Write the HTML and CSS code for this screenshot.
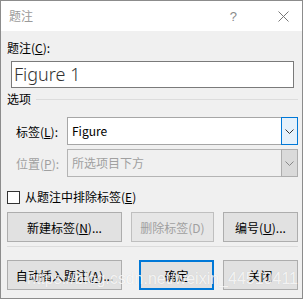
FILE: index.html
```html
<!DOCTYPE html>
<html lang="zh-CN">
<head>
    <meta charset="UTF-8">
    <title>题注</title>
    <link rel="stylesheet" href="styles.css">
</head>
<body>
    <div class="dialog">
        <div class="titlebar">
            <span class="title">题注</span>
            <span class="help">?</span>
            <svg class="close" width="11" height="11" viewBox="0 0 11 11">
                <path d="M0.5 0.5 L10.5 10.5 M10.5 0.5 L0.5 10.5" stroke="#777" stroke-width="1" fill="none"/>
            </svg>
        </div>

        <div class="content">
            <div class="field-label">题注(<u>C</u>):</div>
            <div class="caption-input">Figure 1</div>

            <div class="group-title">
                <span>选项</span>
                <div class="group-line"></div>
            </div>

            <div class="option-row">
                <span class="option-label">标签(<u>L</u>):</span>
                <div class="select">
                    <span class="select-text">Figure</span>
                    <div class="drop-btn active">
                        <svg width="9" height="5" viewBox="0 0 9 5"><path d="M0.5 0.5 L4.5 4.5 L8.5 0.5" stroke="#333" fill="none"/></svg>
                    </div>
                </div>
            </div>

            <div class="option-row second disabled">
                <span class="option-label">位置(<u>P</u>):</span>
                <div class="select">
                    <span class="select-text">所选项目下方</span>
                    <div class="drop-btn">
                        <svg width="9" height="5" viewBox="0 0 9 5"><path d="M0.5 0.5 L4.5 4.5 L8.5 0.5" stroke="#888" fill="none"/></svg>
                    </div>
                </div>
            </div>

            <div class="check-row">
                <span class="checkbox"></span>
                <span>从题注中排除标签(<u>E</u>)</span>
            </div>

            <div class="button-row">
                <button class="btn wide">新建标签(<u>N</u>)...</button>
                <button class="btn mid" disabled>删除标签(D)</button>
                <button class="btn narrow">编号(<u>U</u>)...</button>
            </div>

            <div class="separator"></div>

            <div class="button-row last">
                <button class="btn wide">自动插入题注(<u>A</u>)...</button>
                <button class="btn narrow default">确定</button>
                <button class="btn narrow">关闭</button>
            </div>
        </div>

        <div class="watermark">https://blog.csdn.net/weixin_44510411</div>
    </div>
</body>
</html>
```

FILE: styles.css
```css
* {
    margin: 0;
    padding: 0;
    box-sizing: border-box;
}

body {
    background: #ffffff;
    font-family: "Noto Sans CJK SC", "Noto Sans", sans-serif;
    font-size: 12px;
    color: #000;
}

.dialog {
    position: relative;
    width: 303px;
    height: 299px;
    border: 1px solid #8c8c8c;
    background: #f0f0f0;
    overflow: hidden;
}

.titlebar {
    height: 30px;
    background: #ffffff;
    display: flex;
    align-items: center;
    padding-left: 8px;
}

.title {
    color: #9a9a9a;
    line-height: 16px;
}

.help {
    margin-left: auto;
    color: #8a8a8a;
    font-family: "Liberation Sans", sans-serif;
    font-size: 13px;
}

.close {
    margin-left: 41px;
    margin-right: 13px;
}

.content {
    padding: 9px 4px 8px 6px;
}

.field-label {
    line-height: 16px;
}

.caption-input {
    margin: 5px 4px 0 4px;
    height: 27px;
    background: #fff;
    border: 1px solid #7a7a7a;
    padding-left: 2px;
    font-family: "Noto Sans", sans-serif;
    font-size: 18px;
    font-weight: 300;
    line-height: 24px;
    color: #333;
}

.group-title {
    margin-top: 3px;
    display: flex;
    align-items: center;
    line-height: 16px;
}

.group-line {
    flex: 1;
    height: 1px;
    background: #dcdcdc;
    margin-left: 5px;
}

.option-row {
    margin-top: 10px;
    display: flex;
    align-items: center;
}

.option-row.second {
    margin-top: 4px;
}

.option-label {
    width: 60px;
    padding-left: 9px;
}

.select {
    flex: 1;
    height: 28px;
    display: flex;
    background: #fff;
    border: 1px solid #a6a6a6;
    border-right: none;
}

.select-text {
    flex: 1;
    padding-left: 4px;
    line-height: 26px;
}

.drop-btn {
    width: 17px;
    margin: -1px 0;
    border: 1px solid #adadad;
    background: #dadada;
    display: flex;
    align-items: center;
    justify-content: center;
}

.drop-btn.active {
    border-color: #0078d7;
    background: #e5f1fb;
}

.disabled {
    color: #a0a0a0;
}

.disabled .select {
    background: #f0f0f0;
    border-color: #b4b4b4;
}

.check-row {
    margin-top: 12px;
    display: flex;
    align-items: center;
    line-height: 16px;
}

.checkbox {
    width: 13px;
    height: 13px;
    border: 1px solid #333;
    background: #fff;
    margin-right: 5px;
}

.button-row {
    margin-top: 7px;
    display: flex;
    gap: 9px;
}

.button-row.last {
    margin-top: 13px;
}

.btn {
    height: 30px;
    font-family: inherit;
    font-size: 12px;
    color: #000;
    background: #e1e1e1;
    border: 1px solid #adadad;
}

.btn:disabled {
    color: #a0a0a0;
    background: #e6e6e6;
    border-color: #bfbfbf;
}

.btn.wide {
    width: 115px;
}

.btn.mid {
    width: 83px;
}

.btn.narrow {
    width: 75px;
}

.btn.default {
    border: 2px solid #0078d7;
    margin-left: auto;
}

.separator {
    margin-top: 4px;
    height: 1px;
    background: #dcdcdc;
}

.watermark {
    position: absolute;
    left: 26px;
    top: 269px;
    font-family: "Liberation Sans", sans-serif;
    font-size: 16px;
    line-height: 18px;
    color: rgba(255, 255, 255, 0.8);
    text-shadow: 0 0 1px rgba(0, 0, 0, 0.12);
    white-space: nowrap;
}
```
